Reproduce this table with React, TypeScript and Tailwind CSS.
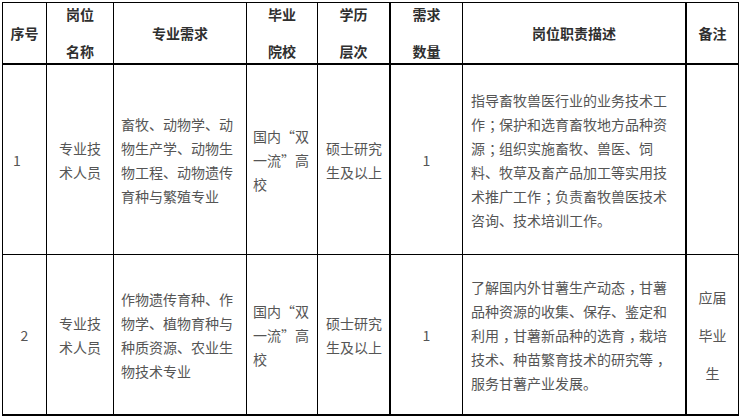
const head = [
  { lines: ['序号'] },
  { lines: ['岗位', '名称'] },
  { lines: ['专业需求'] },
  { lines: ['毕业', '院校'] },
  { lines: ['学历', '层次'] },
  { lines: ['需求', '数量'] },
  { lines: ['岗位职责描述'] },
  { lines: ['备注'] },
];

const rows = [
  {
    no: '1',
    noAlign: 'justify-start pl-[10px]',
    h: 'h-[190px] border-b',
    major: ['畜牧、动物学、动', '物生产学、动物生', '物工程、动物遗传', '育种与繁殖专业'],
    duty: [
      '指导畜牧兽医行业的业务技术工',
      '作；保护和选育畜牧地方品种资',
      '源；组织实施畜牧、兽医、饲',
      '料、牧草及畜产品加工等实用技',
      '术推广工作；负责畜牧兽医技术',
      '咨询、技术培训工作。',
    ],
    note: [] as string[],
  },
  {
    no: '2',
    noAlign: 'justify-center',
    h: 'h-[161px] border-b-2',
    major: ['作物遗传育种、作', '物学、植物育种与', '种质资源、农业生', '物技术专业'],
    duty: [
      '了解国内外甘薯生产动态，甘薯',
      '品种资源的收集、保存、鉴定和',
      '利用，甘薯新品种的选育，栽培',
      '技术、种苗繁育技术的研究等，',
      '服务甘薯产业发展。',
    ],
    note: ['应届', '毕业', '生'],
  },
];

const colBorder = [
  'border-r',
  'border-r',
  'border-r',
  'border-r',
  'border-r-2',
  'border-r',
  'border-r-2',
  'border-r',
];

// full-width ； and ， sit centred in their em box in the reference:
// widen the char before by 4px and narrow the mark by 4px
function Line({ text }: { text: string }) {
  const chars = Array.from(text);
  return (
    <div className="whitespace-nowrap">
      {chars.map((ch, i) => {
        const isMark = ch === '；' || ch === '，';
        const beforeMark = chars[i + 1] === '；' || chars[i + 1] === '，';
        if (isMark) return <span key={i} className="tracking-[-4px]">{ch}</span>;
        if (beforeMark) return <span key={i} className="tracking-[4px]">{ch}</span>;
        return ch;
      })}
    </div>
  );
}

function Lines({ lines }: { lines: string[] }) {
  return (
    <div>
      {lines.map((l, i) => (
        <Line key={i} text={l} />
      ))}
    </div>
  );
}

export default function App() {
  return (
    <div
      className="w-[742px] h-[417px] bg-white pt-[2px] pl-[2px] text-[14px]"
      style={{ fontFamily: '"Microsoft YaHei", "Noto Sans CJK SC", sans-serif' }}
    >
      <div className="grid grid-cols-[44px_67px_133px_71px_73px_72px_224px_52px] w-[737px] border-l border-t border-black">
        {head.map((c, i) => (
          <div
            key={i}
            className={`h-[62px] border-b-2 border-black ${colBorder[i]} flex items-center justify-center text-center font-bold text-[#2f2f2f] leading-[37px]`}
          >
            <Lines lines={c.lines} />
          </div>
        ))}

        {rows.map((r) => (
          <div key={r.no} className="contents text-[#555] leading-[24px]">
            <div className={`${r.h} ${colBorder[0]} border-black flex items-center ${r.noAlign}`}>
              {r.no}
            </div>
            <div className={`${r.h} ${colBorder[1]} border-black flex items-center justify-center`}>
              <Lines lines={['专业技', '术人员']} />
            </div>
            <div className={`${r.h} ${colBorder[2]} border-black flex items-center pl-[7px]`}>
              <Lines lines={r.major} />
            </div>
            <div className={`${r.h} ${colBorder[3]} border-black flex items-center pl-[6px]`}>
              <Lines lines={['国内“双', '一流”高', '校']} />
            </div>
            <div className={`${r.h} ${colBorder[4]} border-black flex items-center pl-[8px]`}>
              <Lines lines={['硕士研究', '生及以上']} />
            </div>
            <div className={`${r.h} ${colBorder[5]} border-black flex items-center justify-center`}>
              1
            </div>
            <div className={`${r.h} ${colBorder[6]} border-black flex items-center pl-[8px]`}>
              <Lines lines={r.duty} />
            </div>
            <div className={`${r.h} ${colBorder[7]} border-black flex items-center justify-center text-center leading-[38px]`}>
              <Lines lines={r.note} />
            </div>
          </div>
        ))}
      </div>
    </div>
  );
}
